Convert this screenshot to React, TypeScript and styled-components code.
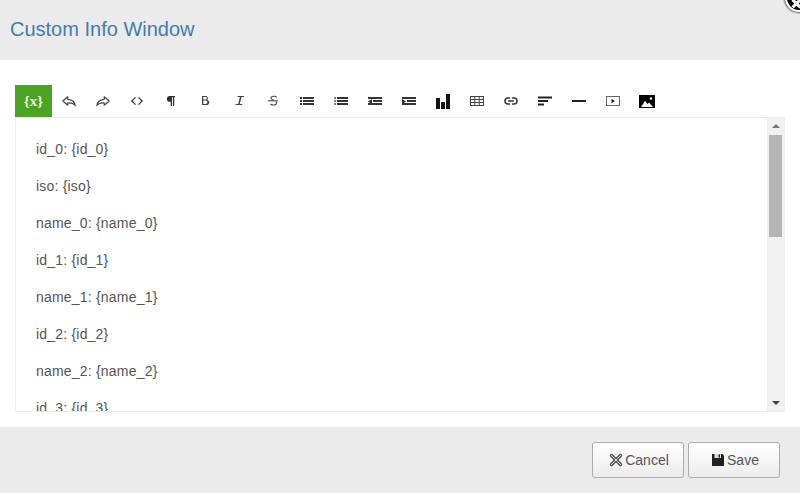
import styled, { createGlobalStyle } from 'styled-components'
import { ReactNode } from 'react'

const GlobalStyle = createGlobalStyle`
  html, body {
    margin: 0;
    padding: 0;
    background: #fff;
    overflow: hidden;
  }
  * {
    box-sizing: border-box;
  }
`

const icons: ReactNode[] = [
  // undo
  <path key="u" d="M6.800 3.800 1.800 8l5 4.200V9.900c3.200-.3 5.600.3 7.400 2.600-.4-3.500-3-5.700-7.400-6.200z" fill="none" stroke="#444" strokeWidth="1.200" strokeLinejoin="round" />,
  // redo
  <path key="r" d="M9.200 3.800 14.200 8l-5 4.200V9.900c-3.200-.3-5.600.3-7.400 2.600.4-3.500 3-5.700 7.400-6.200z" fill="none" stroke="#444" strokeWidth="1.200" strokeLinejoin="round" />,
  // view html
  <path key="c" d="M6.500 4.300 2.800 8l3.700 3.700M9.500 4.300 13.200 8l-3.700 3.700" fill="none" stroke="#333" strokeWidth="1.200" />,
  // paragraph
  <path key="p" d="M12 3H6.800a2.900 2.900 0 0 0 0 5.800h.9V13h1.300V4.200h.9V13h1.300V4.200h.8z" fill="#333" />,
  // bold
  <path key="b" d="M5 3h3.600a2.300 2.300 0 0 1 1.700 3.900A2.600 2.600 0 0 1 9 12H5zm1.300 1.100v2.500h2.200a1.250 1.250 0 0 0 0-2.500zm0 3.500v3.300h2.500a1.650 1.650 0 0 0 0-3.300z" fill="#444" />,
  // italic
  <path key="i" d="M6.500 3h6.500v1.100h-2.500L8.800 10.900h2.300V12H4.500v-1.100h2.700l1.700-6.800H6.500z" fill="#444" />,
  // strike
  <g key="s" fill="none" stroke="#444" strokeWidth="1.100">
    <path d="M11.800 4.300C10.500 2.800 6 2.900 6 5c0 1.300 1.300 1.800 2.800 2.200" />
    <path d="M5.500 11c1.400 1.500 6 1.600 6-.9 0-.6-.2-1-.5-1.300" />
    <path d="M3 7.800h10" />
  </g>,
  // unordered list
  <g key="ul" fill="#333">
    <rect x="1" y="4" width="2" height="2" />
    <rect x="1" y="7" width="2" height="2" />
    <rect x="1" y="10" width="2" height="2" />
    <rect x="4" y="4" width="11" height="2" />
    <rect x="4" y="7" width="11" height="2" />
    <rect x="4" y="10" width="11" height="2" />
  </g>,
  // ordered list
  <g key="ol" fill="#333">
    <rect x="1.500" y="4" width="1.200" height="2" />
    <rect x="1.500" y="7" width="1.200" height="2" />
    <rect x="1.500" y="10" width="1.200" height="2" />
    <rect x="4" y="4" width="11" height="2" />
    <rect x="4" y="7" width="11" height="2" />
    <rect x="4" y="10" width="11" height="2" />
  </g>,
  // outdent
  <g key="od" fill="#333">
    <rect x="1" y="4" width="14" height="2" />
    <rect x="6" y="7" width="9" height="2" />
    <rect x="1" y="10" width="14" height="2" />
    <path d="M5 6v5L1 8.500z" />
  </g>,
  // indent
  <g key="id" fill="#333">
    <rect x="1" y="4" width="14" height="2" />
    <rect x="6" y="7" width="9" height="2" />
    <rect x="1" y="10" width="14" height="2" />
    <path d="M1 6v5l4-2.500z" />
  </g>,
]

const iconsAfterChart: ReactNode[] = [
  // table
  <g key="t" fill="none" stroke="#444" strokeWidth="1">
    <rect x="1.500" y="3.500" width="13" height="9" />
    <path d="M1.500 6.500h13M1.500 9.500h13M5.800 3.500v9M10.200 3.500v9" />
  </g>,
  // link
  <g key="l" fill="none" stroke="#333" strokeWidth="1.500">
    <path d="M6.500 5H5a3 3 0 0 0 0 6h1.500M9.500 5H11a3 3 0 0 1 0 6H9.500" strokeLinecap="round" />
    <path d="M5 8h6" />
  </g>,
  // align left
  <g key="a" fill="#222">
    <rect x="1" y="3.500" width="14" height="2" />
    <rect x="1" y="7" width="10" height="2" />
    <rect x="1" y="10.500" width="6" height="2" />
  </g>,
  // horizontal rule
  <rect key="h" x="1" y="7" width="14" height="2" fill="#222" />,
  // video
  <g key="v">
    <rect x="1.500" y="3.500" width="13" height="9" fill="none" stroke="#666" />
    <path d="M6.500 5.800v4.400L10 8z" fill="#222" />
  </g>,
]

const lines = [
  'id_0: {id_0}',
  'iso: {iso}',
  'name_0: {name_0}',
  'id_1: {id_1}',
  'name_1: {name_1}',
  'id_2: {id_2}',
  'name_2: {name_2}',
  'id_3: {id_3}',
]

function ToolIcon({ children }: { children: ReactNode }) {
  return (
    <Icon viewBox="0 0 16 16" width="16" height="16">
      {children}
    </Icon>
  )
}

export default function App() {
  return (
    <Modal>
      <GlobalStyle />
      <CloseBadge>
        <svg viewBox="0 0 10 10" width="13" height="13">
          <path d="M2 2l6 6M8 2l-6 6" stroke="#fff" strokeWidth="2.400" />
        </svg>
      </CloseBadge>
      <Header>
        <Title>Custom Info Window</Title>
      </Header>
      <Body>
        <Toolbar>
          <VariableButton>{'{x}'}</VariableButton>
          {icons.map((icon, i) => (
            <ToolButton key={i}>
              <ToolIcon>{icon}</ToolIcon>
            </ToolButton>
          ))}
          <ToolButton>
            <ToolIcon>
              <rect x="1" y="5" width="4" height="11" fill="#111" />
              <rect x="6" y="9" width="4" height="7" fill="#111" />
              <rect x="11" y="1" width="4" height="15" fill="#111" />
            </ToolIcon>
          </ToolButton>
          {iconsAfterChart.map((icon, i) => (
            <ToolButton key={i}>
              <ToolIcon>{icon}</ToolIcon>
            </ToolButton>
          ))}
          <ToolButton>
            <ToolIcon>
              <rect x="0" y="2" width="16" height="13" fill="#000" />
              <path d="M2 14l4-6 2.500 3 1.500-1.500 4 4.500z" fill="#fff" />
              <circle cx="12" cy="5.500" r="1.200" fill="#fff" />
            </ToolIcon>
          </ToolButton>
        </Toolbar>
        <Editor>
          <Content>
            {lines.map((line) => (
              <Line key={line}>{line}</Line>
            ))}
          </Content>
          <Scrollbar>
            <ArrowUp />
            <Thumb />
            <Spacer />
            <ArrowDown />
          </Scrollbar>
        </Editor>
      </Body>
      <Footer>
        <FooterButton>
          <svg viewBox="0 0 14 14" width="14" height="14">
            <path d="M2.500 2.500l9 9M11.500 2.500l-9 9" stroke="#555" strokeWidth="3.400" strokeLinecap="round" />
            <path d="M2.500 2.500l9 9M11.500 2.500l-9 9" stroke="#ddd" strokeWidth="1" strokeLinecap="round" />
          </svg>
          Cancel
        </FooterButton>
        <FooterButton>
          <svg viewBox="0 0 14 14" width="14" height="14">
            <path d="M1 1h10.500L13 2.500V13H1z" fill="#222" />
            <rect x="3.500" y="1" width="6.500" height="4" fill="#ddd" />
            <rect x="7.500" y="1.500" width="1.500" height="3" fill="#222" />
          </svg>
          Save
        </FooterButton>
      </Footer>
    </Modal>
  )
}

const Modal = styled.div`
  position: relative;
  width: 800px;
  height: 493px;
  display: flex;
  flex-direction: column;
  overflow: hidden;
  background: #fff;
  font-family: 'Liberation Sans', Arial, sans-serif;
`

const CloseBadge = styled.div`
  position: absolute;
  top: -16px;
  right: -13px;
  width: 28px;
  height: 28px;
  border-radius: 50%;
  background: #000;
  border: 2px solid #fff;
  box-shadow: 0 0 2px 1px rgba(0, 0, 0, 0.6);
  display: flex;
  align-items: center;
  justify-content: center;
  padding-top: 11px;
  padding-right: 6px;
`

const Header = styled.header`
  height: 60px;
  flex: none;
  background: #ebebeb;
  padding: 0 10px 2px;
  display: flex;
  align-items: center;
`

const Title = styled.h4`
  margin: 0;
  font-size: 20px;
  font-weight: normal;
  color: #3f7cb4;
`

const Body = styled.main`
  flex: 1;
  min-height: 0;
  padding: 25px 15px 15px;
  display: flex;
  flex-direction: column;
`

const Toolbar = styled.div`
  display: flex;
  height: 32px;
  flex: none;
`

const VariableButton = styled.div`
  width: 37px;
  height: 32px;
  background: #4aa323;
  color: #f0f8ea;
  display: flex;
  align-items: center;
  justify-content: center;
  font-family: 'Liberation Serif', serif;
  font-size: 15px;
  font-weight: bold;
`

const ToolButton = styled.div`
  width: 34px;
  height: 32px;
  display: flex;
  align-items: center;
  justify-content: center;
`

const Icon = styled.svg`
  display: block;
`

const Editor = styled.div`
  flex: 1;
  min-height: 0;
  display: flex;
  border: 1px solid #ececec;
`

const Content = styled.div`
  flex: 1;
  min-width: 0;
  overflow: hidden;
  padding: 21px 20px 0;
`

const Line = styled.p`
  margin: 0 0 17px;
  font-size: 14px;
  line-height: 20px;
  letter-spacing: 0.2px;
  color: #555;
`

const Scrollbar = styled.div`
  width: 17px;
  flex: none;
  background: #f1f1f1;
  display: flex;
  flex-direction: column;
  align-items: center;
`

const ArrowUp = styled.div`
  width: 0;
  height: 0;
  margin-top: 6px;
  border-left: 4px solid transparent;
  border-right: 4px solid transparent;
  border-bottom: 4px solid #777;
`

const Thumb = styled.div`
  width: 13px;
  height: 102px;
  margin-top: 7px;
  background: #b5b5b5;
`

const Spacer = styled.div`
  flex: 1;
`

const ArrowDown = styled.div`
  width: 0;
  height: 0;
  margin-bottom: 6px;
  border-left: 4px solid transparent;
  border-right: 4px solid transparent;
  border-top: 4px solid #444;
`

const Footer = styled.footer`
  height: 66px;
  flex: none;
  background: #ebebeb;
  padding: 15px 20px 0 0;
  display: flex;
  justify-content: flex-end;
  gap: 4px;
`

const FooterButton = styled.button`
  width: 92px;
  height: 36px;
  padding: 0 0 0 2px;
  display: flex;
  align-items: center;
  justify-content: center;
  gap: 2px;
  border: 1px solid #adadad;
  border-radius: 3px;
  background: linear-gradient(to bottom, #fff, #ececec);
  font-family: 'Liberation Sans', Arial, sans-serif;
  font-size: 14px;
  color: #555;
`
